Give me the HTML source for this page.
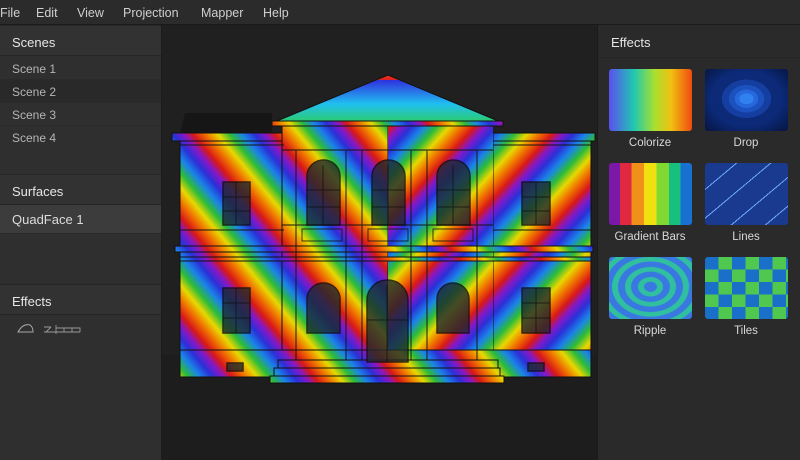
<!DOCTYPE html>
<html><head><meta charset="utf-8"><style>
*{margin:0;padding:0;box-sizing:border-box}
body{width:800px;height:460px;overflow:hidden;background:#1f1f1f;font-family:"Liberation Sans",sans-serif;position:relative}
.menu{position:absolute;left:0;top:0;width:800px;height:25px;background:#2b2b2b;border-bottom:1px solid #1a1a1a;color:#cfcfcf;font-size:12.5px}
.menu span{position:absolute;top:6px}
.left{position:absolute;left:0;top:25px;width:162px;height:435px;background:#2f2f2f;border-right:1px solid #1c1c1c}
.hdr{position:absolute;left:0;width:161px;height:31px;background:#323232;color:#e6e6e6;font-size:13px;padding:9px 0 0 12px;border-bottom:1px solid #262626;border-top:1px solid #262626}
.row{position:absolute;left:0;width:161px;height:23px;color:#b5b5b5;font-size:12px;padding:5px 0 0 12px;border-bottom:1px solid #2a2a2a}
.right{position:absolute;left:597px;top:25px;width:203px;height:435px;background:#2a2a2a;border-left:1px solid #1a1a1a}
.thumb{position:absolute;width:83px;height:62px;border-radius:3px;overflow:hidden}
.lbl{position:absolute;width:100px;text-align:center;color:#d8d8d8;font-size:11.5px}
</style></head><body>
<div class="menu"><span style="left:0">File</span><span style="left:36px">Edit</span><span style="left:77px">View</span><span style="left:123px">Projection</span><span style="left:201px">Mapper</span><span style="left:263px">Help</span></div>

<div class="left">
<div class="hdr" style="top:0">Scenes</div>
<div class="row" style="top:32px;background:#2f2f2f">Scene 1</div>
<div class="row" style="top:55px;background:#292929">Scene 2</div>
<div class="row" style="top:78px;background:#2f2f2f">Scene 3</div>
<div class="row" style="top:101px;background:#2f2f2f;border:none">Scene 4</div>
<div class="hdr" style="top:149px">Surfaces</div>
<div class="row" style="top:180px;height:29px;background:#3c3c3c;color:#dcdcdc;font-size:13px;padding-top:7px">QuadFace 1</div>
<div class="hdr" style="top:259px">Effects</div>
<svg style="position:absolute;left:15px;top:297px" width="70" height="14" viewBox="0 0 70 14">
<path d="M3 10 Q8 1 15 3 Q18 5 18 10 Z" fill="none" stroke="#aaa" stroke-width="1"/>
<path d="M29 10 H65 M31 10 L36 5 M29 5 H36 M41 3 V12 M41 6 H65 V10 M49 6 V10 M57 6 V10 M65 6 V10" fill="none" stroke="#999" stroke-width="0.9"/>
</svg>
</div>

<svg style="position:absolute;left:162px;top:25px" width="435" height="435" viewBox="162 25 435 435">
<defs>
<linearGradient id="rb" gradientUnits="userSpaceOnUse" x1="0" y1="0" x2="48" y2="-40" spreadMethod="repeat">
<stop offset="0" stop-color="#d81818"/><stop offset="0.15" stop-color="#f07000"/><stop offset="0.3" stop-color="#e8d800"/><stop offset="0.45" stop-color="#2cbc38"/><stop offset="0.6" stop-color="#1a84e8"/><stop offset="0.75" stop-color="#2a30d8"/><stop offset="0.88" stop-color="#8418c8"/><stop offset="1" stop-color="#d81818"/>
</linearGradient>
<linearGradient id="rb3" gradientUnits="userSpaceOnUse" x1="0" y1="0" x2="-46" y2="-42" spreadMethod="repeat">
<stop offset="0" stop-color="#d81818"/><stop offset="0.15" stop-color="#f07000"/><stop offset="0.3" stop-color="#e8d800"/><stop offset="0.45" stop-color="#2cbc38"/><stop offset="0.6" stop-color="#1a84e8"/><stop offset="0.75" stop-color="#2a30d8"/><stop offset="0.88" stop-color="#8418c8"/><stop offset="1" stop-color="#d81818"/>
</linearGradient>
<linearGradient id="rb2" gradientUnits="userSpaceOnUse" x1="388" y1="80" x2="388" y2="200" spreadMethod="repeat">
<stop offset="0" stop-color="#3030e0"/><stop offset="0.2" stop-color="#20c0f0"/><stop offset="0.4" stop-color="#30d040"/><stop offset="0.6" stop-color="#f0e020"/><stop offset="0.8" stop-color="#ff7a00"/><stop offset="1" stop-color="#e02020"/>
</linearGradient>
</defs>
<rect x="162" y="25" width="435" height="435" fill="#202020"/>
<rect x="162" y="355" width="435" height="105" fill="#1d1d1d"/>
<polygon points="185,113 272,113 272,133 180,133" fill="#161616"/>
<g stroke="#111" stroke-width="1">
<rect x="180" y="133" width="104" height="244" fill="url(#rb)"/>
<rect x="493" y="133" width="98" height="244" fill="url(#rb3)"/>
<rect x="172" y="133" width="112" height="8" fill="url(#rb)"/>
<rect x="493" y="133" width="102" height="8" fill="url(#rb3)"/>
<rect x="282" y="123" width="106" height="240" fill="url(#rb)"/>
<rect x="388" y="123" width="105" height="240" fill="url(#rb3)" stroke="none"/>
<polygon points="272,123 388,75 503,123" fill="url(#rb2)"/>
<rect x="272" y="121" width="231" height="5" fill="url(#rb)"/>
<rect x="175" y="246" width="418" height="6" fill="url(#rb)"/>
<rect x="180" y="257" width="411" height="4" fill="url(#rb)"/>
<rect x="180" y="350" width="411" height="27" fill="url(#rb)"/>
<rect x="278" y="360" width="220" height="8" fill="url(#rb)"/>
<rect x="274" y="368" width="226" height="8" fill="url(#rb)"/>
<rect x="270" y="376" width="234" height="7" fill="url(#rb)"/>
</g>
<g fill="none" stroke="#151515" stroke-width="1.2" opacity="0.8">
<path d="M296 150V360M346 150V360M362 150V360M411 150V360M427 150V360M477 150V360"/>
<path d="M282 150H493M282 225H493M180 145H284M493 145H591M180 230H284M493 230H591"/>
</g>
<g fill="#1e2a2e" stroke="#0d0d0d" stroke-width="1.5" opacity="0.8">
<rect x="223" y="182" width="27" height="43"/><rect x="522" y="182" width="28" height="43"/>
<rect x="223" y="288" width="27" height="45"/><rect x="522" y="288" width="28" height="45"/>
<path d="M307 225V176A16.5 16 0 0 1 340 176V225Z"/>
<path d="M372 225V176A16.5 16 0 0 1 405 176V225Z"/>
<path d="M437 225V176A16.5 16 0 0 1 470 176V225Z"/>
<path d="M307 333V299A16.5 16 0 0 1 340 299V333Z"/>
<path d="M437 333V299A16 16 0 0 1 469 299V333Z"/>
<path d="M367 362V300A20.5 20 0 0 1 408 300V362Z"/>
<rect x="227" y="363" width="16" height="8"/><rect x="528" y="363" width="16" height="8"/>
</g>
<g stroke="#0d0d0d" stroke-width="1" opacity="0.7">
<path d="M236 182V225M223 197H250M223 211H250M536 182V225M522 197H550M522 211H550M236 288V333M223 303H250M223 318H250M536 288V333M522 303H550M522 318H550M323 165V225M388 165V225M453 165V225M307 190H340M372 190H405M437 190H470M307 207H340M372 207H405M437 207H470M387 285V362M367 320H408"/>
</g>
<g fill="none" stroke="#111" opacity="0.8">
<rect x="302" y="229" width="40" height="12"/>
<rect x="368" y="229" width="40" height="12"/>
<rect x="433" y="229" width="40" height="12"/>
</g>
</svg>

<div class="right">
<div style="position:absolute;left:0;top:0;width:202px;height:33px;border-bottom:1px solid #252525;color:#e6e6e6;font-size:13px;padding:10px 0 0 13px">Effects</div>
<div class="thumb" style="left:11px;top:44px;background:linear-gradient(90deg,#5a4ef0,#20c8b0 30%,#a8e030 55%,#f0c010 75%,#f04a10)"></div>
<div class="lbl" style="left:2px;top:112px">Colorize</div>
<div class="thumb" style="left:107px;top:44px;background:radial-gradient(ellipse at 50% 48%,#3080f0 0 12%,#2668dc 12% 20%,#1c52c0 20% 30%,#143ea0 30% 42%,#0c2a78 42% 60%,#061440 100%)"></div>
<div class="lbl" style="left:98px;top:112px">Drop</div>
<div class="thumb" style="left:11px;top:138px;background:linear-gradient(90deg,#7a18a8 0 13%,#e02840 13% 27%,#f09018 27% 42%,#f0e010 42% 57%,#80d830 57% 72%,#18c080 72% 86%,#1870d0 86%)"></div>
<div class="lbl" style="left:2px;top:206px">Gradient Bars</div>
<div class="thumb" style="left:107px;top:138px;background:repeating-linear-gradient(-40deg,#1a3a90 0 14px,#6fa8ff 14px 15px,#1a3a90 15px 22px),#1a3a90"></div>
<div class="lbl" style="left:98px;top:206px">Lines</div>
<div class="thumb" style="left:11px;top:232px;background:repeating-radial-gradient(ellipse at 50% 48%,#3878e0 0 6px,#30c0a0 7px 12px,#3878e0 13px)"></div>
<div class="lbl" style="left:2px;top:300px">Ripple</div>
<div class="thumb" style="left:107px;top:232px;background:repeating-conic-gradient(#50c850 0 25%,#1a70c8 0 50%) 0 0/27px 25px"></div>
<div class="lbl" style="left:98px;top:300px">Tiles</div>
</div>
</body></html>
